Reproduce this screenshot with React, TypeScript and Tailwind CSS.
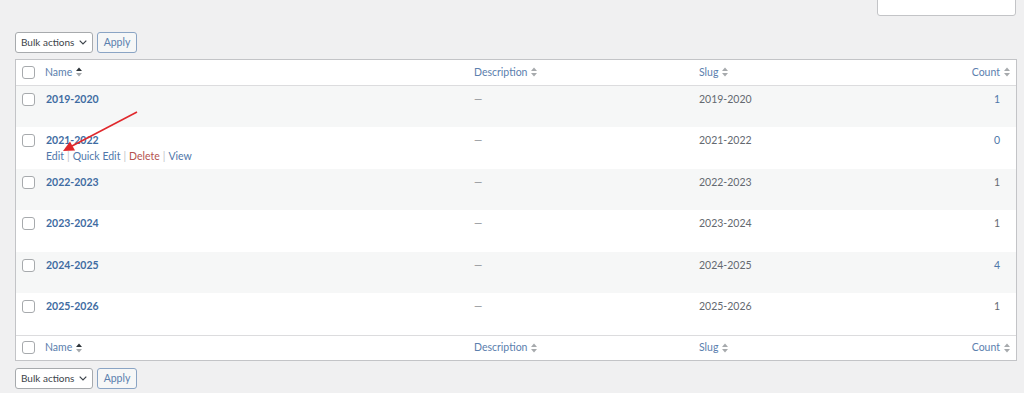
import React from "react";

const rows = [
  { name: "2019-2020", slug: "2019-2020", count: "1", countLink: true },
  { name: "2021-2022", slug: "2021-2022", count: "0", countLink: true, actions: true },
  { name: "2022-2023", slug: "2022-2023", count: "1", countLink: false },
  { name: "2023-2024", slug: "2023-2024", count: "1", countLink: false },
  { name: "2024-2025", slug: "2024-2025", count: "4", countLink: true },
  { name: "2025-2026", slug: "2025-2026", count: "1", countLink: false },
];

function SortIcon({ active }: { active?: boolean }) {
  return (
    <svg width="6" height="10" viewBox="0 0 6 10" className="ml-[4px] inline-block">
      <path d="M0 4 L3 0.5 L6 4 Z" fill={active ? "#2c3338" : "#a7aaad"} />
      <path d="M0 6 L3 9.5 L6 6 Z" fill="#a7aaad" />
    </svg>
  );
}

function Checkbox() {
  return <div className="w-[13px] h-[13px] rounded-[3px] border border-[#a7aaad] bg-white" />;
}

function Toolbar() {
  return (
    <div className="flex items-center gap-[4px] h-[21px] whitespace-nowrap">
      <div className="h-[21px] w-[78px] bg-white border border-[#a7aaad] rounded-[3px] flex items-center gap-[5px] pl-[5px] text-[#3c434a] text-[10px]">
        <span>Bulk actions</span>
        <svg width="8" height="5" viewBox="0 0 8 5" className="shrink-0">
          <path d="M0.7 0.7 L4 4 L7.3 0.7" stroke="#3c434a" strokeWidth="1.2" fill="none" />
        </svg>
      </div>
      <div className="h-[21px] w-[40px] bg-[#f6f7f7] border border-[#8aa4c4] rounded-[3px] flex items-center justify-center text-[#5a7fae] text-[10.5px]">
        Apply
      </div>
    </div>
  );
}

function HeaderRow({ bottom }: { bottom?: boolean }) {
  return (
    <div
      className={`grid grid-cols-[23px_427px_225px_1fr_90px] h-[25.5px] items-center bg-white text-[#5b80ae] ${
        bottom ? "border-t border-[#dcdcde]" : "border-b border-[#dcdcde]"
      }`}
    >
      <div className="pl-[6px] flex items-center"><Checkbox /></div>
      <div className="pl-[6px] flex items-center">Name<SortIcon active /></div>
      <div className="pl-[8px] flex items-center">Description<SortIcon /></div>
      <div className="pl-[8px] flex items-center">Slug<SortIcon /></div>
      <div className="pr-[6px] flex items-center justify-end">Count<SortIcon /></div>
    </div>
  );
}

export default function App() {
  return (
    <div
      className="relative w-[1024px] h-[393px] bg-[#f0f0f1] overflow-hidden text-[10.5px] leading-[13px] whitespace-nowrap"
      style={{ fontFamily: 'Lato, "Open Sans", sans-serif' }}
    >
      <div className="flex justify-end pr-[8px]">
        <div className="w-[139px] h-[17px] -mt-[1px] bg-white border border-[#c3c4c7] rounded-b-[3px]" />
      </div>
      <div className="px-[15px] pt-[16px] pr-[7px]">
        <Toolbar />
        <div className="mt-[6px] border border-[#c3c4c7] bg-white">
          <HeaderRow />
          {rows.map((r, i) => (
            <div
              key={r.name}
              className={`grid grid-cols-[23px_427px_225px_1fr_90px] h-[41.5px] items-start ${
                i % 2 === 0 ? "bg-[#f6f7f7]" : "bg-white"
              }`}
            >
              <div className="pl-[6px] pt-[7px]"><Checkbox /></div>
              <div className="pl-[7px] pt-[7px]">
                <div className="font-bold text-[#3f6ca2]">{r.name}</div>
                {r.actions && (
                  <div className="mt-[3px] text-[#4f77aa] flex items-center">
                    <span>Edit</span>
                    <span className="text-[#c3c4c7] px-[3px]">|</span>
                    <span>Quick Edit</span>
                    <span className="text-[#c3c4c7] px-[3px]">|</span>
                    <span className="text-[#b5534f]">Delete</span>
                    <span className="text-[#c3c4c7] px-[3px]">|</span>
                    <span>View</span>
                  </div>
                )}
              </div>
              <div className="pl-[8px] pt-[7px] text-[#8c8f94]">—</div>
              <div className="pl-[8px] pt-[7px] text-[#646970]">{r.slug}</div>
              <div className={`pr-[16px] pt-[7px] text-right ${r.countLink ? "text-[#4f77aa]" : "text-[#646970]"}`}>
                {r.count}
              </div>
            </div>
          ))}
          <HeaderRow bottom />
        </div>
        <div className="mt-[7px]">
          <Toolbar />
        </div>
      </div>
      <svg className="absolute left-0 top-0 pointer-events-none" width="1024" height="393">
        <line x1="137" y1="112" x2="72" y2="146" stroke="#e0282c" strokeWidth="1.6" />
        <path d="M63 151 L70 141.5 L75 150.5 Z" fill="#e0282c" />
      </svg>
    </div>
  );
}
